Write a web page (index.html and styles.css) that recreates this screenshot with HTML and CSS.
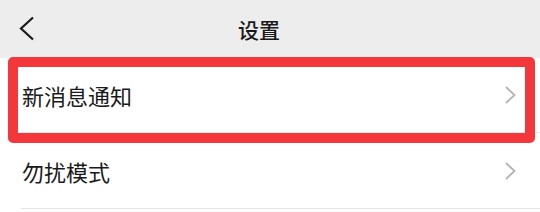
FILE: index.html
```html
<!DOCTYPE html>
<html lang="zh-CN">
<head>
    <meta charset="UTF-8">
    <meta name="viewport" content="width=device-width, initial-scale=1.0">
    <title>设置</title>
    <link rel="stylesheet" href="styles.css">
</head>
<body>
    <div class="page">
        <div class="top-bar">
            <span class="back">
                <svg width="16" height="26" viewBox="0 0 16 26">
                    <polyline points="14,1.5 2,12.5 14,23.5" fill="none" stroke="#1a1a1a" stroke-width="2.2"/>
                </svg>
            </span>
            <div class="title">设置</div>
        </div>
        <div class="list">
            <div class="row">
                <span class="label">新消息通知</span>
                <svg class="arrow" width="11" height="18" viewBox="0 0 11 18">
                    <polyline points="1,1 9.5,9 1,17" fill="none" stroke="#b3b3b3" stroke-width="1.8"/>
                </svg>
                <span class="mark"></span>
            </div>
            <div class="row">
                <span class="label">勿扰模式</span>
                <svg class="arrow" width="11" height="18" viewBox="0 0 11 18">
                    <polyline points="1,1 9.5,9 1,17" fill="none" stroke="#b3b3b3" stroke-width="1.8"/>
                </svg>
            </div>
        </div>
    </div>
</body>
</html>
```

FILE: styles.css
```css
*{
    box-sizing: border-box;
}

body{
    margin: 0;
    background: #fff;
    font-family: "Noto Sans CJK SC", "Noto Sans", sans-serif;
    color: #1a1a1a;
}

.top-bar{
    position: relative;
    height: 58px;
    background: #ededed;
    display: flex;
    align-items: center;
    justify-content: center;
    padding-right: 22px;
}

.back{
    position: absolute;
    left: 19px;
    top: 16px;
    display: flex;
}

.title{
    font-size: 21px;
    font-weight: 500;
    line-height: 1;
}

.row{
    position: relative;
    height: 75px;
    margin-left: 21px;
    padding-right: 24px;
    display: flex;
    align-items: center;
    justify-content: space-between;
    border-bottom: 1px solid #e6e6e6;
}

.row + .row{
    height: 76px;
}

.label{
    font-size: 22px;
    line-height: 1;
    margin-left: 1px;
}

.mark{
    position: absolute;
    top: -1px;
    left: -13px;
    right: 5px;
    height: 86px;
    border: 10px solid #f4373b;
    border-radius: 5px;
}
```
